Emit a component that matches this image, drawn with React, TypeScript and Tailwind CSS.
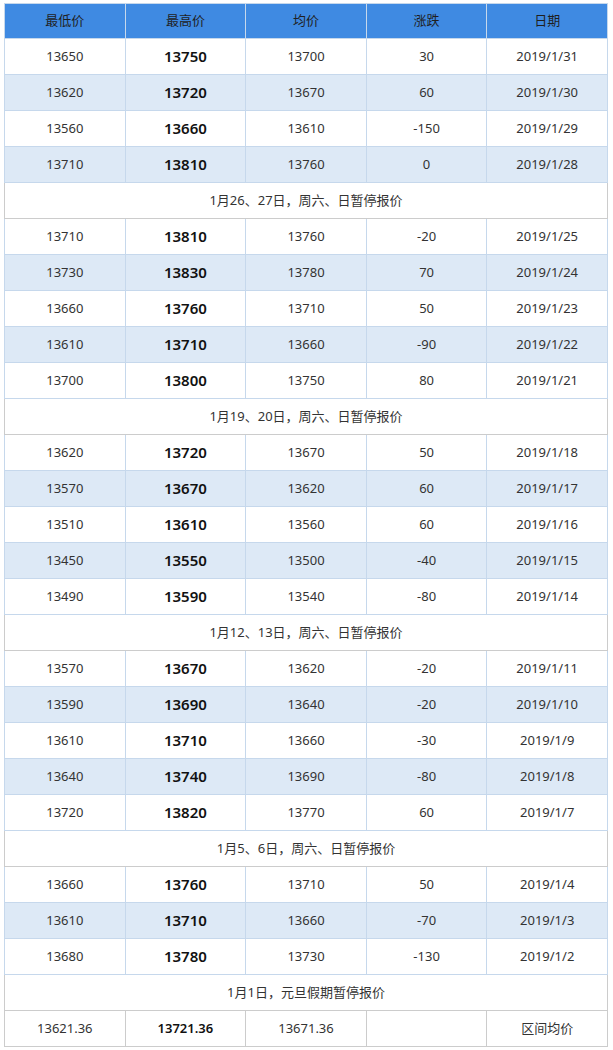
const DATA: (string[] | string)[] = [
  ['13650', '13750', '13700', '30', '2019/1/31'],
  ['13620', '13720', '13670', '60', '2019/1/30'],
  ['13560', '13660', '13610', '-150', '2019/1/29'],
  ['13710', '13810', '13760', '0', '2019/1/28'],
  '1月26、27日，周六、日暂停报价',
  ['13710', '13810', '13760', '-20', '2019/1/25'],
  ['13730', '13830', '13780', '70', '2019/1/24'],
  ['13660', '13760', '13710', '50', '2019/1/23'],
  ['13610', '13710', '13660', '-90', '2019/1/22'],
  ['13700', '13800', '13750', '80', '2019/1/21'],
  '1月19、20日，周六、日暂停报价',
  ['13620', '13720', '13670', '50', '2019/1/18'],
  ['13570', '13670', '13620', '60', '2019/1/17'],
  ['13510', '13610', '13560', '60', '2019/1/16'],
  ['13450', '13550', '13500', '-40', '2019/1/15'],
  ['13490', '13590', '13540', '-80', '2019/1/14'],
  '1月12、13日，周六、日暂停报价',
  ['13570', '13670', '13620', '-20', '2019/1/11'],
  ['13590', '13690', '13640', '-20', '2019/1/10'],
  ['13610', '13710', '13660', '-30', '2019/1/9'],
  ['13640', '13740', '13690', '-80', '2019/1/8'],
  ['13720', '13820', '13770', '60', '2019/1/7'],
  '1月5、6日，周六、日暂停报价',
  ['13660', '13760', '13710', '50', '2019/1/4'],
  ['13610', '13710', '13660', '-70', '2019/1/3'],
  ['13680', '13780', '13730', '-130', '2019/1/2'],
  '1月1日，元旦假期暂停报价',
];

const HEADERS = ['最低价', '最高价', '均价', '涨跌', '日期'];

export default function App() {
  let stripe = 0;
  return (
    <div
      className="bg-white pt-[3px] pl-[4px] text-[13px] text-[#333]"
      style={{ fontFamily: '"Noto Sans", "Noto Sans CJK SC", sans-serif' }}
    >
      <table className="w-[604px] table-fixed border-collapse">
        <thead>
          <tr className="h-[35px] bg-[#3f8ae2]">
            {HEADERS.map((h) => (
              <th key={h} className="border border-[#c6d8ec] text-center font-normal text-[#1f1f1f]">
                {h}
              </th>
            ))}
          </tr>
        </thead>
        <tbody>
          {DATA.map((row, i) => {
            if (typeof row === 'string') {
              stripe = 0;
              return (
                <tr key={i} className="h-[36px] bg-white">
                  <td colSpan={5} className="border border-[#cccccc] text-center">
                    {row}
                  </td>
                </tr>
              );
            }
            const bg = stripe % 2 === 0 ? 'bg-white' : 'bg-[#dde9f6]';
            stripe += 1;
            return (
              <tr key={i} className={`h-[36px] ${bg}`}>
                {row.map((cell, j) => (
                  <td
                    key={j}
                    className={`border border-[#c6d8ec] text-center ${
                      j === 1 ? 'text-[15px] font-semibold text-[#111]' : ''
                    }`}
                  >
                    {cell}
                  </td>
                ))}
              </tr>
            );
          })}
          <tr className="h-[36px] bg-white">
            <td className="border border-[#cccccc] text-center">13621.36</td>
            <td className="border border-[#cccccc] text-center font-semibold text-[#111]">13721.36</td>
            <td className="border border-[#cccccc] text-center">13671.36</td>
            <td className="border border-[#cccccc] text-center"></td>
            <td className="border border-[#cccccc] text-center">区间均价</td>
          </tr>
        </tbody>
      </table>
    </div>
  );
}
